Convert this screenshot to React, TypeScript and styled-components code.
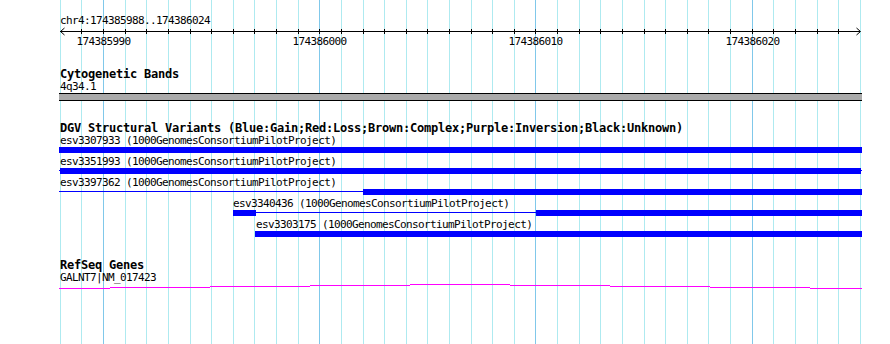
import styled, { createGlobalStyle } from "styled-components";

const GlobalStyle = createGlobalStyle`
  html, body {
    margin: 0;
    padding: 0;
    background: #ffffff;
  }
  body {
    font-family: "DejaVu Sans Mono", "Liberation Mono", monospace;
    color: #000;
  }
`;

// 37 bases across 800px, first base edge at x=60
const START = 174385988;
const BASES = 37;
const LEFT = 60;
const STEP = 800 / BASES;
const ORIGIN = 59; // left edge of the track canvas
const gridX = (k: number) => Math.floor(LEFT + STEP * k + 0.3);

const Page = styled.div`
  position: relative;
  width: 890px;
  height: 344px;
  overflow: hidden;
  background: #ffffff;
`;

const GridLayer = styled.svg`
  position: absolute;
  left: 0;
  top: 0;
  z-index: 0;
`;

const Tracks = styled.div`
  position: relative;
  z-index: 1;
  display: flex;
  flex-direction: column;
  padding: 15px 0 0 ${ORIGIN}px;
`;

const Track = styled.section<{ $gap: number }>`
  display: flex;
  flex-direction: column;
  margin-top: ${(p) => p.$gap}px;
`;

const Title = styled.div`
  font-weight: bold;
  font-size: 12px;
  line-height: 13px;
  letter-spacing: -0.225px;
  padding-left: 1px;
  white-space: nowrap;
`;

const Label = styled.div<{ $x?: number }>`
  font-size: 11px;
  line-height: 12px;
  height: 12px;
  letter-spacing: -0.62px;
  white-space: nowrap;
  margin-left: ${(p) => (p.$x ?? 0) + 1}px;
`;

const FeatureRow = styled.div`
  display: flex;
  flex-direction: column;
  padding-bottom: 3px;
`;

const Glyph = styled.svg`
  display: block;
  shape-rendering: crispEdges;
`;

const Ruler = styled.svg`
  display: block;
  shape-rendering: crispEdges;
  font-family: "DejaVu Sans Mono", "Liberation Mono", monospace;
  font-size: 11px;
  letter-spacing: -0.62px;
`;

type Seg = [number, number];

interface Feature {
  name: string;
  at: number;
  thin?: Seg;
  thick: Seg[];
}

const SOURCE = "1000GenomesConsortiumPilotProject";

const variants: Feature[] = [
  { name: "esv3307933", at: 0, thick: [[0, 803]] },
  { name: "esv3351993", at: 0, thin: [0, 803], thick: [[1, 802]] },
  { name: "esv3397362", at: 0, thin: [0, 304], thick: [[304, 803]] },
  { name: "esv3340436", at: 173, thin: [197, 477], thick: [[174, 197], [477, 803]] },
  { name: "esv3303175", at: 196, thick: [[196, 803]] },
];

// stepped intron line of the RefSeq transcript (x0, x1, y)
const transcript: [number, number, number][] = [
  [0, 51, 4],
  [51, 151, 3],
  [151, 251, 2],
  [251, 351, 1],
  [351, 451, 0],
  [451, 551, 1],
  [551, 651, 2],
  [651, 751, 3],
  [751, 803, 4],
];

function Grid() {
  const lines = [];
  for (let k = 0; k <= BASES; k++) {
    const major = (START + k) % 10 === 0;
    lines.push(
      <rect
        key={k}
        x={gridX(k)}
        y={0}
        width={1}
        height={344}
        fill={major ? "#80c8ea" : "#aeeaf0"}
      />
    );
  }
  return (
    <GridLayer width={890} height={344} shapeRendering="crispEdges">
      {lines}
    </GridLayer>
  );
}

function Scale() {
  const ticks = [];
  const labels = [];
  for (let k = 1; k < BASES; k++) {
    const x = gridX(k) - ORIGIN;
    ticks.push(<rect key={k} x={x} y={2} width={1} height={5} fill="#000" />);
    if ((START + k) % 10 === 0) {
      labels.push(
        <text key={k} x={x + 0.5} y={18} textAnchor="middle" fill="#000">
          {START + k}
        </text>
      );
    }
  }
  return (
    <Ruler width={803} height={20}>
      <rect x={1} y={4} width={800} height={1} fill="#000" />
      {ticks}
      <path
        d="M5.5 1 L1.5 4.5 L5.5 8 M797.5 1 L801.5 4.5 L797.5 8"
        stroke="#000"
        strokeWidth={1}
        fill="none"
        shapeRendering="auto"
      />
      {labels}
    </Ruler>
  );
}

function Variant({ f }: { f: Feature }) {
  return (
    <FeatureRow>
      <Label $x={f.at}>
        {f.name} ({SOURCE})
      </Label>
      <Glyph width={803} height={6}>
        {f.thin && (
          <rect x={f.thin[0]} y={2} width={f.thin[1] - f.thin[0]} height={1} fill="#0000ff" />
        )}
        {f.thick.map(([a, b]) => (
          <rect key={a} x={a} y={0} width={b - a} height={6} fill="#0000ff" />
        ))}
      </Glyph>
    </FeatureRow>
  );
}

export default function App() {
  return (
    <Page>
      <GlobalStyle />
      <Grid />
      <Tracks>
        <Label>chr4:174385988..174386024</Label>
        <Scale />

        <Track $gap={21}>
          <Title>Cytogenetic Bands</Title>
          <Label>4q34.1</Label>
          <Glyph width={803} height={8}>
            <rect x={0} y={0} width={803} height={8} fill="#000" />
            <rect x={0} y={1} width={803} height={6} fill="#aaaaaa" />
          </Glyph>
        </Track>

        <Track $gap={21}>
          <Title>
            DGV Structural Variants (Blue:Gain;Red:Loss;Brown:Complex;Purple:Inversion;Black:Unknown)
          </Title>
          {variants.map((f) => (
            <Variant key={f.name} f={f} />
          ))}
        </Track>

        <Track $gap={19}>
          <Title>RefSeq Genes</Title>
          <Label>GALNT7|NM_017423</Label>
          <Glyph width={803} height={6}>
            {transcript.map(([a, b, y]) => (
              <rect key={a} x={a} y={y} width={b - a} height={1} fill="#ff00ff" />
            ))}
          </Glyph>
        </Track>
      </Tracks>
    </Page>
  );
}
